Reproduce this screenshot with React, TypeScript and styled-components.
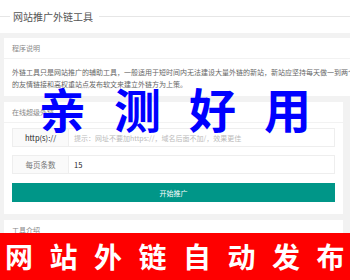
import styled, { createGlobalStyle } from "styled-components";

const GlobalStyle = createGlobalStyle`
  html, body {
    margin: 0;
    padding: 0;
    background: #fff;
  }
  body {
    font-family: "Noto Sans CJK SC", "Liberation Sans", sans-serif;
  }
`;

const Page = styled.div`
  position: relative;
  width: 350px;
  height: 280px;
  overflow: hidden;
  background: #fff;
`;

const TitleBar = styled.div`
  height: 33px;
  display: flex;
  align-items: center;
  gap: 3px;
  &::before {
    content: "";
    width: 10px;
    border-top: 1px solid #e6e6e6;
  }
  &::after {
    content: "";
    flex: 1;
    margin-left: 3px;
    border-top: 1px solid #e6e6e6;
  }
`;

const Title = styled.div`
  font-size: 10px;
  line-height: 12px;
  color: #555;
`;

const Main = styled.div`
  background: #f2f2f2;
  padding: 5px 7px 0 4px;
  display: flex;
  flex-direction: column;
  gap: 6px;
  height: 247px;
`;

const Card = styled.div<{ $wide?: boolean }>`
  background: #fff;
  margin-right: ${(p) => (p.$wide ? "-7px" : "0")};
  overflow: hidden;
`;

const CardHead = styled.div`
  height: 20px;
  display: flex;
  align-items: center;
  padding: 0 8px;
  font-size: 7px;
  color: #888;
  border-bottom: 1px solid #f2f2f2;
`;

const CardBody = styled.div`
  padding: 7px 8px 6px;
`;

const Line = styled.div`
  font-size: 7px;
  line-height: 12px;
  color: #666;
  white-space: nowrap;
`;

const Form = styled.div`
  padding: 5px 8px 12px;
  display: flex;
  flex-direction: column;
  gap: 8px;
`;

const Row = styled.div`
  display: flex;
  height: 19px;
  border: 1px solid #eee;
  box-sizing: border-box;
`;

const Label = styled.div<{ $dark?: boolean }>`
  width: 55px;
  flex: none;
  background: #fafafa;
  border-right: 1px solid #eee;
  display: flex;
  align-items: center;
  justify-content: center;
  font-size: 7.5px;
  color: ${(p) => (p.$dark ? "#222" : "#777")};
`;

const Value = styled.div<{ $placeholder?: boolean }>`
  flex: 1;
  display: flex;
  align-items: center;
  padding-left: 5px;
  font-size: ${(p) => (p.$placeholder ? "7px" : "7.5px")};
  color: ${(p) => (p.$placeholder ? "#bbb" : "#222")};
  white-space: nowrap;
  overflow: hidden;
`;

const Button = styled.div`
  height: 19px;
  background: #009688;
  color: #fff;
  font-size: 7px;
  display: flex;
  align-items: center;
  justify-content: center;
  margin-top: 1px;
`;

const Stamp = styled.div`
  position: absolute;
  left: 0;
  right: 0;
  top: 78px;
  padding-left: 39px;
  font-size: 47px;
  line-height: 60px;
  font-weight: 700;
  color: #0000ff;
  letter-spacing: 28px;
  white-space: nowrap;
`;

const Banner = styled.div`
  position: absolute;
  left: 0;
  right: 0;
  bottom: 0;
  height: 47px;
  background: #fe0000;
  color: #fff;
  font-size: 28px;
  font-weight: 700;
  letter-spacing: 16.5px;
  display: flex;
  align-items: center;
  justify-content: center;
  padding-left: 16px;
  padding-bottom: 2px;
  box-sizing: border-box;
  white-space: nowrap;
`;

export default function App() {
  return (
    <>
      <GlobalStyle />
      <Page>
        <TitleBar>
          <Title>网站推广外链工具</Title>
        </TitleBar>
        <Main>
          <Card $wide>
            <CardHead>程序说明</CardHead>
            <CardBody>
              <Line>外链工具只是网站推广的辅助工具，一般适用于短时间内无法建设大量外链的新站，新站应坚持每天做一到两个</Line>
              <Line>的友情链接和高权重站点发布软文来建立外链方为上策。</Line>
            </CardBody>
          </Card>
          <Card>
            <CardHead>在线超级外链</CardHead>
            <Form>
              <Row>
                <Label $dark>http(s)://</Label>
                <Value $placeholder>提示：网址不要加https://，域名后面不加/，效果更佳</Value>
              </Row>
              <Row>
                <Label>每页条数</Label>
                <Value>15</Value>
              </Row>
              <Button>开始推广</Button>
            </Form>
          </Card>
          <Card>
            <CardHead>工具介绍</CardHead>
          </Card>
        </Main>
        <Stamp>亲测好用</Stamp>
        <Banner>网站外链自动发布</Banner>
      </Page>
    </>
  );
}
